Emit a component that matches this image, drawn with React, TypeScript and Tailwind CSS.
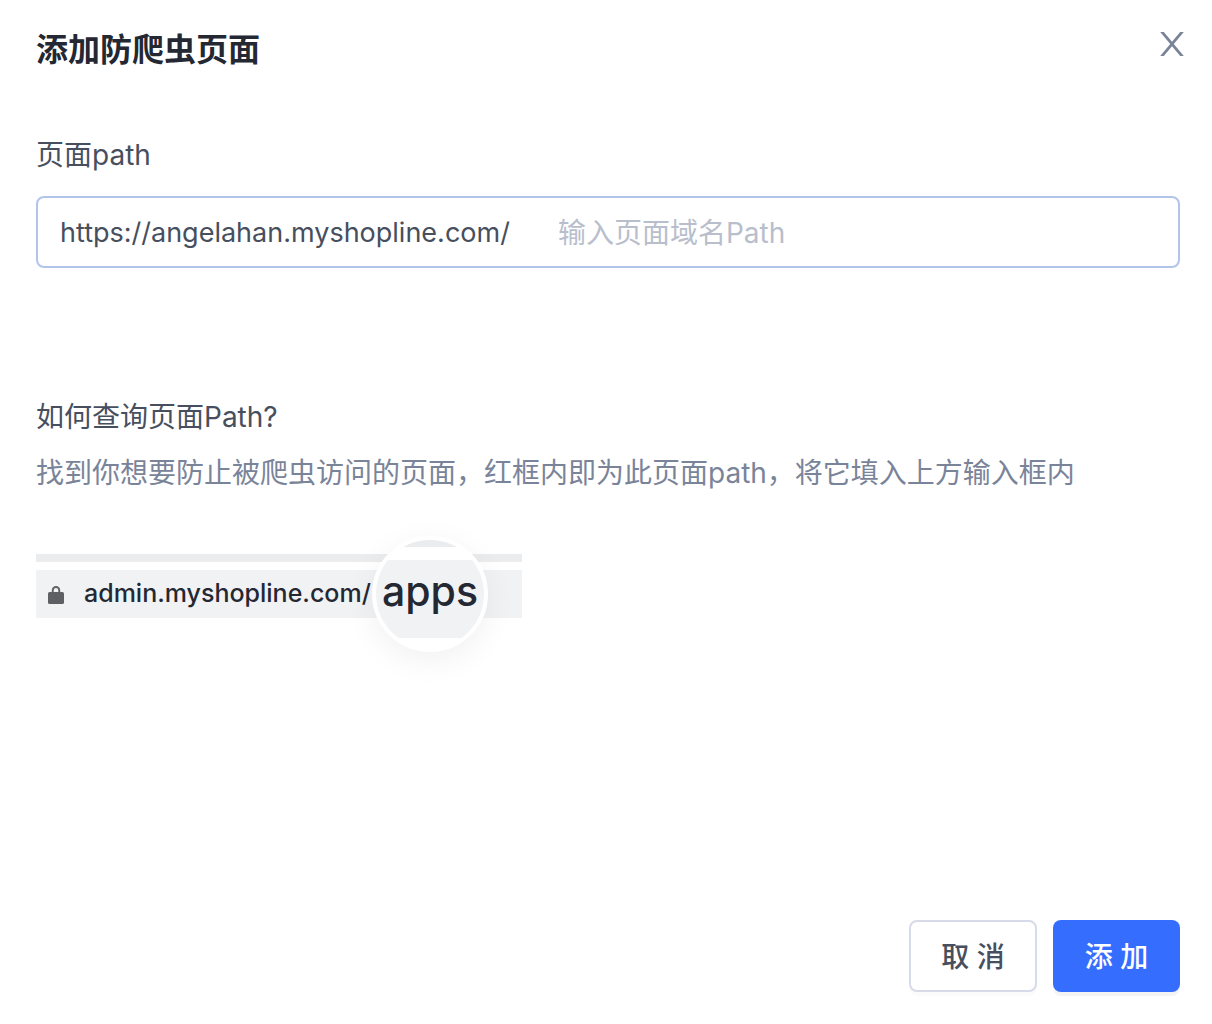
import React, { useState } from 'react';

function CloseIcon() {
  return (
    <svg viewBox="0 0 24 24" className="h-6 w-6" fill="currentColor" aria-hidden="true">
      <path d="M0.2 0H3.8L12 9.8L20.2 0H23.8L13.8 12L23.8 24H20.2L12 14.2L3.8 24H0.2L10.2 12Z" />
    </svg>
  );
}

function LockIcon() {
  return (
    <svg viewBox="0 0 16 18" className="h-[18px] w-4 shrink-0" aria-hidden="true">
      <path d="M4.75 7V4.25a3.25 3.25 0 0 1 6.5 0V7" fill="none" stroke="#5f6063" strokeWidth="1.9" />
      <rect x="0" y="6" width="16" height="12" rx="1.6" fill="#5f6063" />
    </svg>
  );
}

function AddressExample() {
  return (
    <div className="relative w-[486px] max-w-full">
      <div className="h-2 bg-[#ebecee]" />
      <div className="mt-2 flex h-12 items-center gap-5 bg-[#f1f2f4] pt-0.5 pl-3 text-[#242833]">
        <LockIcon />
        <span className="pb-1 text-[25px] leading-8 font-medium">admin.myshopline.com/</span>
      </div>
      <div className="absolute -top-[18px] left-[336px] flex h-[116px] w-[116px] flex-col overflow-hidden rounded-full border-4 border-white bg-white shadow-[0_8px_32px_rgba(0,0,0,0.06)]">
        <div className="h-[7px] shrink-0 bg-[#ebecee]" />
        <div className="mt-[13px] flex h-[78px] shrink-0 items-center justify-center bg-[#f1f2f4] pb-4 text-[41px] leading-none font-medium text-[#242833]">
          apps
        </div>
      </div>
    </div>
  );
}

export default function App() {
  const [path, setPath] = useState('');

  return (
    <div
      role="dialog"
      aria-labelledby="dialog-title"
      className="flex min-h-screen flex-col bg-white pr-8 pb-8 pl-9 font-[Inter,'Noto_Sans_CJK_SC',sans-serif] text-[28px] leading-10 text-[#474f5e]"
    >
      <header className="flex items-start justify-between pt-6">
        <h1 id="dialog-title" className="pt-0.5 text-[32px] leading-12 font-bold text-[#242833]">
          添加防爬虫页面
        </h1>
        <button type="button" aria-label="关闭" className="-mr-1 pt-2 text-[#7a8499]">
          <CloseIcon />
        </button>
      </header>

      <main className="flex-1">
        <label htmlFor="page-path" className="mt-[61px] block">
          页面path
        </label>
        <div className="mt-[21px] flex h-[72px] items-center gap-12 rounded-lg border-2 border-[#b2c4e9] px-[22px] pt-0.5">
          <span className="text-[27px]">https://angelahan.myshopline.com/</span>
          <input
            id="page-path"
            type="text"
            value={path}
            onChange={(e) => setPath(e.target.value)}
            placeholder="输入页面域名Path"
            className="min-w-0 flex-1 bg-transparent outline-none placeholder:text-[#b8becc]"
          />
        </div>

        <h2 className="mt-[129px]">如何查询页面Path?</h2>
        <p className="mt-4 mb-[61px] text-[#7a8499]">
          找到你想要防止被爬虫访问的页面，红框内即为此页面path，将它填入上方输入框内
        </p>
        <AddressExample />
      </main>

      <footer className="flex justify-end gap-4 font-medium">
        <button
          type="button"
          className="h-[72px] w-32 rounded-lg border-2 border-[#d7dbe9] bg-white pt-0.5 shadow-[0_4px_0_rgba(0,0,0,0.016)]"
        >
          取 消
        </button>
        <button
          type="button"
          className="h-[72px] w-[127px] rounded-lg bg-[#356dff] pt-0.5 text-white shadow-[0_4px_0_rgba(0,0,0,0.045)]"
        >
          添 加
        </button>
      </footer>
    </div>
  );
}
